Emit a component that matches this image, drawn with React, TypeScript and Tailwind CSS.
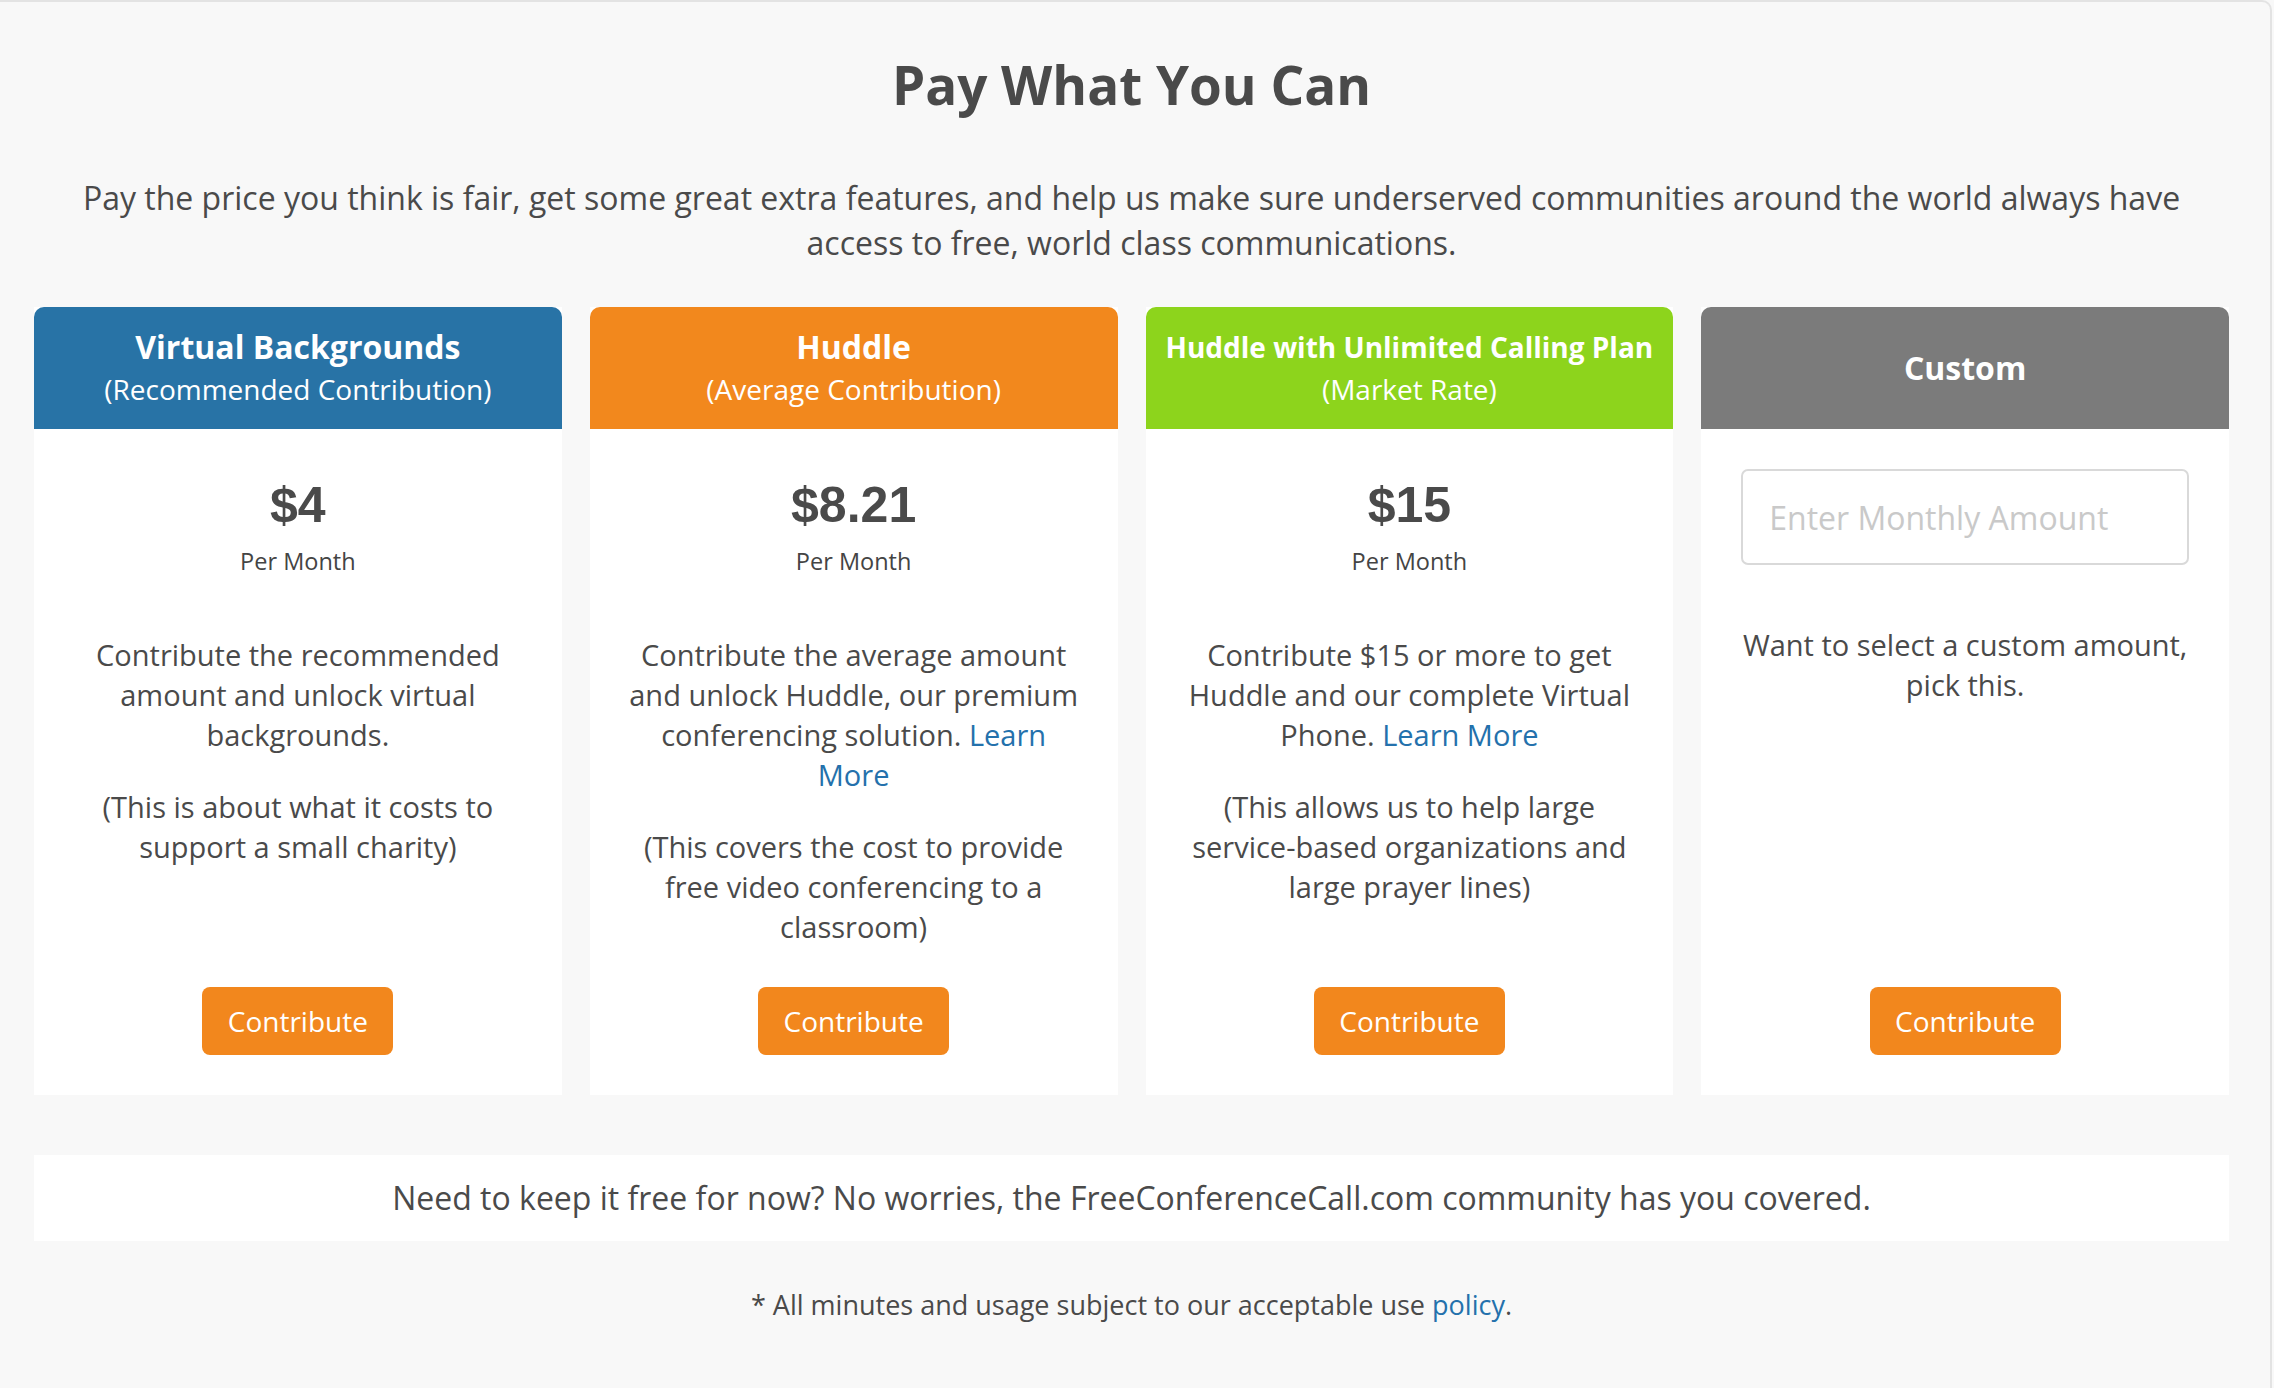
const PLANS = [
  {
    title: 'Virtual Backgrounds',
    subtitle: '(Recommended Contribution)',
    header: 'bg-[#2873a6]',
    titleSize: 'text-[32px]',
    price: '$4',
    body: [
      <>Contribute the recommended amount and unlock virtual backgrounds.</>,
      <>(This is about what it costs to support a small charity)</>,
    ],
  },
  {
    title: 'Huddle',
    subtitle: '(Average Contribution)',
    header: 'bg-[#f2881d]',
    titleSize: 'text-[32px]',
    price: '$8.21',
    body: [
      <>
        Contribute the average amount and unlock Huddle, our premium conferencing solution.{' '}
        <a href="#" className="text-[#2471ac]">Learn More</a>
      </>,
      <>(This covers the cost to provide free video conferencing to a classroom)</>,
    ],
  },
  {
    title: 'Huddle with Unlimited Calling Plan',
    subtitle: '(Market Rate)',
    header: 'bg-[#8dd41c]',
    titleSize: 'text-[28px]',
    price: '$15',
    body: [
      <>
        Contribute $15 or more to get Huddle and our complete Virtual Phone.{' '}
        <a href="#" className="text-[#2471ac]">Learn More</a>
      </>,
      <>(This allows us to help large service-based organizations and large prayer lines)</>,
    ],
  },
];

function ContributeButton() {
  return (
    <button className="mt-auto h-[68px] w-[191px] shrink-0 rounded-[8px] bg-[#f2871d] text-[28px] text-white">
      Contribute
    </button>
  );
}

export default function App() {
  return (
    <div className="min-h-screen bg-[#f8f8f8] font-['Open_Sans',sans-serif] text-[#4a4a4a]">
      <div className="h-[1388px] w-[2272px] rounded-tr-[10px] border-r-2 border-t-2 border-[#e3e3e3] pl-[34px] pr-[41px] pt-[49px]">
        <h1 className="text-center text-[53px] font-bold leading-[67px] text-[#4a4a4a]">Pay What You Can</h1>
        <p className="mx-auto mt-[57px] max-w-[2110px] text-center text-[32px] leading-[45px]">
          Pay the price you think is fair, get some great extra features, and help us make sure underserved
          communities around the world always have access to free, world class communications.
        </p>

        <div className="mt-[42px] grid grid-cols-4 gap-[28px]">
          {PLANS.map((plan) => (
            <div key={plan.title} className="flex flex-col bg-white">
              <div
                className={`flex h-[122px] flex-col items-center justify-center rounded-t-[10px] text-white ${plan.header}`}
              >
                <div className={`font-bold leading-[42px] ${plan.titleSize}`}>{plan.title}</div>
                <div className="text-[28px] leading-[42px]">{plan.subtitle}</div>
              </div>
              <div className="flex flex-1 flex-col items-center px-[36px] pb-[40px] pt-[40px] text-center">
                <div className="mt-[6px] font-['Liberation_Sans',Arial,sans-serif] text-[50px] font-bold leading-[60px] text-[#4a4a4a]">
                  {plan.price}
                </div>
                <div className="mt-[10px] text-[23.5px] leading-[32px] text-[#444]">Per Month</div>
                <div className="mb-[40px] mt-[58px] space-y-[32px] text-[29px] leading-[40px]">
                  {plan.body.map((para, i) => (
                    <p key={i}>{para}</p>
                  ))}
                </div>
                <ContributeButton />
              </div>
            </div>
          ))}

          <div className="flex flex-col bg-white">
            <div className="flex h-[122px] items-center justify-center rounded-t-[10px] bg-[#7b7b7b] text-[32px] font-bold text-white">
              Custom
            </div>
            <div className="flex flex-1 flex-col items-center px-[40px] pb-[40px] pt-[40px] text-center">
              <input
                type="text"
                placeholder="Enter Monthly Amount"
                className="h-[96px] w-full rounded-[7px] border-2 border-[#d9d9d9] bg-white px-[26px] text-[32px] text-[#4a4a4a] outline-none placeholder:text-[#c9c9c9]"
              />
              <p className="mb-[42px] mt-[60px] text-[29px] leading-[40px]">Want to select a custom amount, pick this.</p>
              <ContributeButton />
            </div>
          </div>
        </div>

        <div className="mt-[60px] flex h-[86px] items-center justify-center bg-white text-[32px] leading-[44px]">
          Need to keep it free for now? No worries, the FreeConferenceCall.com community has you covered.
        </div>

        <p className="mt-[45px] text-center text-[27px] leading-[38px]">
          * All minutes and usage subject to our acceptable use{' '}
          <a href="#" className="text-[#2471ac]">
            policy
          </a>
          .
        </p>
      </div>
    </div>
  );
}
